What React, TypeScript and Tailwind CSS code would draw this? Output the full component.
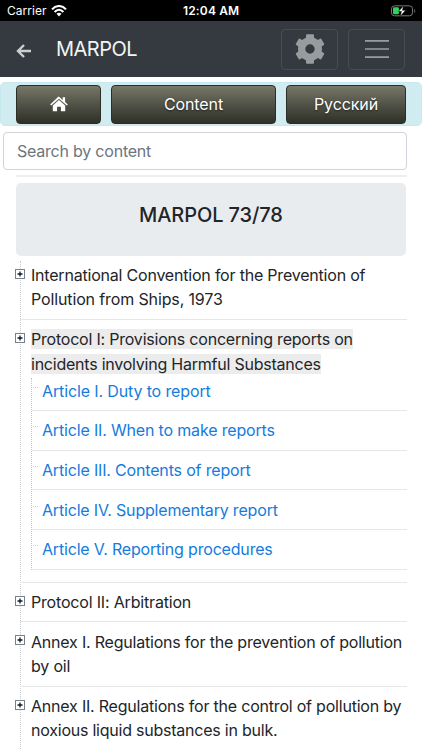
import React from "react";

const FONT = "font-['Inter','Liberation_Sans',sans-serif]";

type Line = { text: string; cls: string };

function Lines({ lines, marked = false }: { lines: Line[]; marked?: boolean }) {
  return (
    <>
      {lines.map((l) => (
        <div key={l.text} className="h-[24.4px] whitespace-nowrap leading-[24.4px]">
          <span
            className={`${l.cls} ${marked ? "bg-linear-to-b from-[#ececec] to-[#ececec] bg-[length:100%_20px] bg-[position:0_0] bg-no-repeat pb-px" : ""}`}
          >
            {l.text}
          </span>
        </div>
      ))}
    </>
  );
}

function Expander() {
  return (
    <svg className="absolute -left-[5px] top-[13px] h-[10px] w-[10px]" viewBox="0 0 10 10">
      <rect x="0.5" y="0.5" width="9" height="9" fill="#fff" stroke="#75818c" />
      <path d="M2.5 5h5M5 2.5v5" stroke="#111820" strokeWidth="1.3" />
    </svg>
  );
}

type RowProps = {
  lines: Line[];
  size: string;
  marked?: boolean;
  children?: React.ReactNode;
};

function Row({ lines, size, marked, children }: RowProps) {
  return (
    <li className={`relative border-b border-[#e6e7e8] pl-[11px] ${size}`}>
      <Expander />
      <Lines lines={lines} marked={marked} />
      {children}
    </li>
  );
}

const articles: (Line & { h: string; tick: string })[] = [
  { text: "Article I. Duty to report", cls: "tracking-[-0.13px]", h: "h-[33px] pt-[1px]", tick: "top-[9px]" },
  { text: "Article II. When to make reports", cls: "tracking-[-0.17px]", h: "h-[40px] pt-[7.5px]", tick: "top-[15px]" },
  { text: "Article III. Contents of report", cls: "tracking-[-0.17px]", h: "h-[39px] pt-[7.5px]", tick: "top-[15px]" },
  { text: "Article IV. Supplementary report", cls: "tracking-[-0.18px]", h: "h-[40px] pt-[8px]", tick: "top-[16px]" },
  { text: "Article V. Reporting procedures", cls: "tracking-[-0.18px]", h: "h-[40px] pt-[7.5px]", tick: "top-[15px]" },
];

const button =
  "flex h-[39px] items-center justify-center rounded-[4px] border border-[#2c2d25] bg-linear-to-b from-[#777868] to-[#2f3028] text-white [text-shadow:0_1px_2px_#222]";

export default function App() {
  return (
    <div className={`h-[750px] w-[422px] overflow-hidden bg-white text-[16px] text-[#212529] ${FONT}`}>
      <div className="flex h-[21px] items-center bg-black pl-[7px] pr-[6px] text-white">
        <span className="w-[40px] whitespace-nowrap text-[12px] tracking-[0.05px]">Carrier</span>
        <svg className="ml-[4px] h-[12px] w-[16px]" viewBox="0 0 16 12" fill="none" stroke="#fff" strokeWidth="2.1">
          <path d="M1 4.4C5-.1 11-.1 15 4.4M3.6 7C6.4 4 9.6 4 12.4 7" />
          <path d="M5.5 8.8Q8 6.6 10.5 8.8L8 11.5Z" fill="#fff" stroke="none" />
        </svg>
        <span className="ml-[116px] whitespace-nowrap text-[12px] font-semibold tracking-[0.15px]">12:04 AM</span>
        <svg className="ml-auto h-[12px] w-[25px]" viewBox="0 0 25 12">
          <rect x="0.5" y="0.8" width="21" height="10" rx="3" fill="none" stroke="#77797a" />
          <path d="M23.3 4v4c1.3-.6 1.3-3.4 0-4Z" fill="#77797a" />
          <rect x="2" y="2.3" width="6" height="7" rx="1.3" fill="#35d158" />
          <path d="M12.7 0.7 7.3 6.5h3.2L9.2 11.3 14.7 5.3h-3.3Z" fill="#fff" stroke="#000" strokeWidth="0.5" />
        </svg>
      </div>

      <header className="flex h-[56px] items-center bg-[#343a40] pr-[17px]">
        <svg className="ml-[16px] mt-[4px] h-[14px] w-[16px]" viewBox="0 0 16 14" fill="none" stroke="#cccecf" strokeWidth="2.4">
          <path d="M8 1 2 7l6 6M2 7h13" />
        </svg>
        <span className="ml-[24px] text-[20px] leading-none tracking-[-0.5px] text-[#f3f4f4]">MARPOL</span>
        <button className="ml-auto flex h-[41px] w-[57px] items-center justify-center rounded-[4px] border border-[#484d53]">
          <svg className="h-[30px] w-[30px]" viewBox="-15 -15 30 30" fill="#999c9f">
            <path
              fillRule="evenodd"
              d="M-3-14.8H3Q4-14.8 4-13.8V-11.3Q6.2-10.6 7.8-9L10-10.2Q11-10.7 11.5-9.8L14.1-5.3Q14.6-4.4 13.7-3.9L11.7-2.6Q12.3 0 11.7 2.6L13.7 3.9Q14.6 4.4 14.1 5.3L11.5 9.8Q11 10.7 10 10.2L7.8 9Q6.2 10.6 4 11.3V13.8Q4 14.8 3 14.8H-3Q-4 14.8-4 13.8V11.3Q-6.2 10.6-7.8 9L-10 10.2Q-11 10.7-11.5 9.8L-14.1 5.3Q-14.6 4.4-13.7 3.9L-11.7 2.6Q-12.3 0-11.7-2.6L-13.7-3.9Q-14.6-4.4-14.1-5.3L-11.5-9.8Q-11-10.7-10-10.2L-7.8-9Q-6.2-10.6-4-11.3V-13.8Q-4-14.8-3-14.8ZM0-4.7A4.7 4.7 0 1 0 0 4.7 4.7 4.7 0 1 0 0-4.7Z"
            />
          </svg>
        </button>
        <button className="ml-[10px] flex h-[41px] w-[57px] items-center justify-center rounded-[4px] border border-[#484d53]">
          <svg className="h-[20px] w-[26px]" viewBox="0 0 26 20" stroke="#999c9f" strokeWidth="1.7">
            <path d="M1 1.8h24M1 10h24M1 18.2h24" />
          </svg>
        </button>
      </header>

      <nav className="mt-[5px] flex h-[44px] items-center gap-[10px] rounded-[5px] border border-[#c6e9ef] bg-[#d1ecf1] pl-[15px] text-[16px]">
        <button className={`w-[85px] ${button}`}>
          <svg className="h-[16px] w-[18px]" viewBox="0 0 18 16" fill="#fff">
            <path d="M9 .7 12.7 3.9V1.2h2.4V6l2.7 2.4-1 1.1L9 2.8 1.2 9.5.2 8.4 8 .9Q9 .1 9 .7Z" />
            <path d="M9 4.1 15.2 9.4V15.2H10.9V10.7H7.1V15.2H2.8V9.4Z" />
          </svg>
        </button>
        <button className={`w-[165px] tracking-[-0.1px] ${button}`}>Content</button>
        <button className={`w-[120px] tracking-[-0.1px] ${button}`}>Русский</button>
      </nav>

      <input
        className="ml-[3px] mt-[6px] block h-[38px] w-[404px] rounded-[4px] border border-[#ced4da] bg-white px-[13px] text-[16px] tracking-[-0.22px] placeholder:text-[#6c757d]"
        placeholder="Search by content"
      />
      <div className="ml-[16px] mt-[5px] h-[2px] w-[391px] bg-[#eeeeee]" />
      <h1 className="ml-[16px] mt-[6px] flex h-[73px] w-[390px] justify-center rounded-[5px] bg-[#e9ecef] pt-[20px] text-[20px] font-medium leading-[25px] tracking-[-0.1px]">
        MARPOL 73/78
      </h1>

      <ul className="relative ml-[20px] w-[387px]">
        <div className="absolute left-0 top-[5px] h-[520px] border-l border-dotted border-[#c9cdd0]" />
        <Row
          size="h-[64px] pt-[7px]"
          lines={[
            { text: "International Convention for the Prevention of", cls: "tracking-[-0.205px]" },
            { text: "Pollution from Ships, 1973", cls: "tracking-[-0.13px]" },
          ]}
        />
        <Row
          marked
          size="h-[263px] pt-[7.2px]"
          lines={[
            { text: "Protocol I: Provisions concerning reports on", cls: "tracking-[-0.21px]" },
            { text: "incidents involving Harmful Substances", cls: "tracking-[-0.23px]" },
          ]}
        >
          <ul className="mt-[2px] h-[192px] border-l border-dotted border-[#c0c4c8] text-[#157bdd]">
            {articles.map((a) => (
              <li key={a.text} className={`relative border-b border-[#e6e7e8] pl-[10px] ${a.h}`}>
                <span className={`absolute left-[1px] w-[5px] border-t border-dotted border-[#d0d3d5] ${a.tick}`} />
                <Lines lines={[a]} />
              </li>
            ))}
          </ul>
        </Row>
        <Row size="h-[39px] pt-[7px]" lines={[{ text: "Protocol II: Arbitration", cls: "tracking-[-0.18px]" }]} />
        <Row
          size="h-[65px] pt-[7.5px]"
          lines={[
            { text: "Annex I. Regulations for the prevention of pollution", cls: "tracking-[-0.205px]" },
            { text: "by oil", cls: "tracking-[-0.2px]" },
          ]}
        />
        <Row
          size="h-[64px] pt-[7px]"
          lines={[
            { text: "Annex II. Regulations for the control of pollution by", cls: "tracking-[-0.21px]" },
            { text: "noxious liquid substances in bulk.", cls: "tracking-[-0.23px]" },
          ]}
        />
      </ul>
    </div>
  );
}
